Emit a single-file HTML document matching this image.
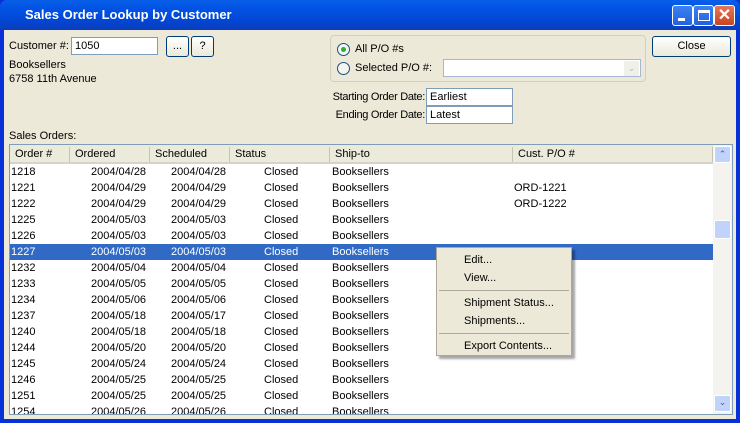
<!DOCTYPE html>
<html><head><style>
*{margin:0;padding:0;box-sizing:border-box}
body{width:740px;height:423px;overflow:hidden;font:11px "Liberation Sans",sans-serif;color:#000;background:#0831d9;position:relative}
.a{position:absolute;white-space:nowrap}
#title{left:0;top:0;width:740px;height:30px;background:linear-gradient(#0a5fe8,#0256e6 20%,#0246d4 70%,#0b3cb8);border-radius:7px 7px 0 0}
#client{left:4px;top:30px;width:732px;height:389px;background:#ece9d8}
.tb{width:21px;height:21px;top:5px;border:1px solid #fff;border-radius:3px;background:linear-gradient(#3c81f3,#2163e0)}
.inp{background:#fff;border:1px solid #7f9db9;padding:2px 3px;line-height:13px}
.btn{border:1px solid #003c74;border-radius:3px;background:linear-gradient(#fff,#ece9d8);text-align:center}
.rad{width:13px;height:13px;border:1px solid #1c5180;border-radius:50%;background:#f4f4f0}
.row{left:0;width:703px;height:16px;line-height:16px}
.row span{position:absolute}
.hd span{position:absolute;top:3px}
.sep{position:absolute;top:2px;width:1px;height:15px;background:#c7c5b2}
</style></head><body>
<div class="a" id="title"></div>
<div class="a" style="left:25px;top:7px;color:#fff;font-weight:bold;font-size:13px">Sales Order Lookup by Customer</div>
<div class="a tb" style="left:672px"><div style="position:absolute;left:5px;top:12px;width:7px;height:3px;background:#fff"></div></div>
<div class="a tb" style="left:693px"><div style="position:absolute;left:4px;top:4px;width:12px;height:11px;border:1px solid #fff;border-top-width:3px"></div></div>
<div class="a tb" style="left:714px;background:linear-gradient(#e5775a,#c8451f);color:#fff;font-weight:bold;font-size:16px;text-align:center;line-height:19px">✕</div>
<div class="a" id="client"></div>

<div class="a" style="left:9px;top:40px">Customer #:</div>
<div class="a inp" style="left:71px;top:37px;width:87px;height:18px">1050</div>
<div class="a btn" style="left:166px;top:36px;width:23px;height:21px;line-height:18px">...</div>
<div class="a btn" style="left:191px;top:36px;width:23px;height:21px;line-height:18px">?</div>
<div class="a" style="left:9px;top:59px">Booksellers</div>
<div class="a" style="left:9px;top:73px">6758 11th Avenue</div>

<div class="a" style="left:330px;top:35px;width:316px;height:47px;border:1px solid #d0d0bf;border-radius:4px"></div>
<div class="a rad" style="left:337px;top:43px"><div style="position:absolute;left:3px;top:3px;width:5px;height:5px;border-radius:50%;background:#2bb32b"></div></div>
<div class="a" style="left:355px;top:43px">All P/O #s</div>
<div class="a rad" style="left:337px;top:62px"></div>
<div class="a" style="left:355px;top:62px">Selected P/O #:</div>
<div class="a inp" style="left:443px;top:59px;width:198px;height:18px;border-color:#a5b8cf"></div>
<div class="a" style="left:624px;top:61px;width:15px;height:15px;background:#f0f0ea;border-radius:2px;color:#bbb;font-size:9px;text-align:center;line-height:15px">⌄</div>
<div class="a" style="left:300px;top:91px;width:125px;text-align:right;letter-spacing:-0.3px">Starting Order Date:</div>
<div class="a inp" style="left:426px;top:88px;width:87px;height:18px">Earliest</div>
<div class="a" style="left:300px;top:109px;width:125px;text-align:right;letter-spacing:-0.3px">Ending Order Date:</div>
<div class="a inp" style="left:426px;top:106px;width:87px;height:18px">Latest</div>
<div class="a btn" style="left:652px;top:36px;width:79px;height:21px;line-height:18px">Close</div>

<div class="a" style="left:9px;top:130px">Sales Orders:</div>
<div class="a" style="left:9px;top:144px;width:724px;height:271px;border:1px solid #7f9db9;background:#fff;overflow:hidden">
 <div class="a hd" style="left:0;top:0;width:704px;height:19px;background:#ebeadb;border-bottom:2px solid #d6d3ce">
  <span style="left:5px">Order #</span><i class="sep" style="left:59px"></i>
  <span style="left:65px">Ordered</span><i class="sep" style="left:139px"></i>
  <span style="left:145px">Scheduled</span><i class="sep" style="left:219px"></i>
  <span style="left:225px">Status</span><i class="sep" style="left:319px"></i>
  <span style="left:325px">Ship-to</span><i class="sep" style="left:502px"></i>
  <span style="left:508px">Cust. P/O #</span><i class="sep" style="left:702px"></i>
 </div>
 <div class="a" id="rows" style="left:0;top:19px;width:703px"></div>
 <div class="a" style="left:703px;top:0;width:19px;height:269px;background:#f4f3ee"></div>
 <div class="a" style="left:704px;top:1px;width:17px;height:17px;background:#c1d3fb;border:1px solid #fff;border-radius:2px;color:#4d6185;text-align:center;font-size:9px;line-height:15px">⌃</div>
 <div class="a" style="left:704px;top:75px;width:17px;height:19px;background:#c1d3fb;border:1px solid #fff;border-radius:2px"></div>
 <div class="a" style="left:704px;top:250px;width:17px;height:17px;background:#c1d3fb;border:1px solid #fff;border-radius:2px;color:#4d6185;text-align:center;font-size:9px;line-height:12px">⌄</div>
</div>

<div class="a" style="left:436px;top:247px;width:136px;height:109px;background:#ece9d8;border:1px solid #aca899;box-shadow:3px 3px 2px rgba(0,0,0,.35)">
 <div class="a" style="left:27px;top:6px">Edit...</div>
 <div class="a" style="left:27px;top:24px">View...</div>
 <div class="a" style="left:2px;top:42px;width:130px;height:1px;background:#aca899"></div>
 <div class="a" style="left:27px;top:49px">Shipment Status...</div>
 <div class="a" style="left:27px;top:67px">Shipments...</div>
 <div class="a" style="left:2px;top:85px;width:130px;height:1px;background:#aca899"></div>
 <div class="a" style="left:27px;top:92px">Export Contents...</div>
</div>
<script>
var d=[["1218","04/28","04/28",""],["1221","04/29","04/29","ORD-1221"],["1222","04/29","04/29","ORD-1222"],["1225","05/03","05/03",""],["1226","05/03","05/03",""],["1227","05/03","05/03",""],["1232","05/04","05/04",""],["1233","05/05","05/05",""],["1234","05/06","05/06",""],["1237","05/18","05/17",""],["1240","05/18","05/18",""],["1244","05/20","05/20",""],["1245","05/24","05/24",""],["1246","05/25","05/25",""],["1251","05/25","05/25",""],["1254","05/26","05/26",""]];
var h="";d.forEach(function(r,i){var s=i==5?"background:#316ac5;color:#fff;":"";
h+='<div class="a row" style="'+s+'top:'+(i*16)+'px"><span style="left:1px">'+r[0]+'</span><span style="left:81px">2004/'+r[1]+'</span><span style="left:161px">2004/'+r[2]+'</span><span style="left:254px">Closed</span><span style="left:322px">Booksellers</span><span style="left:504px">'+r[3]+'</span></div>';});
document.getElementById("rows").innerHTML=h;
</script>
</body></html>
